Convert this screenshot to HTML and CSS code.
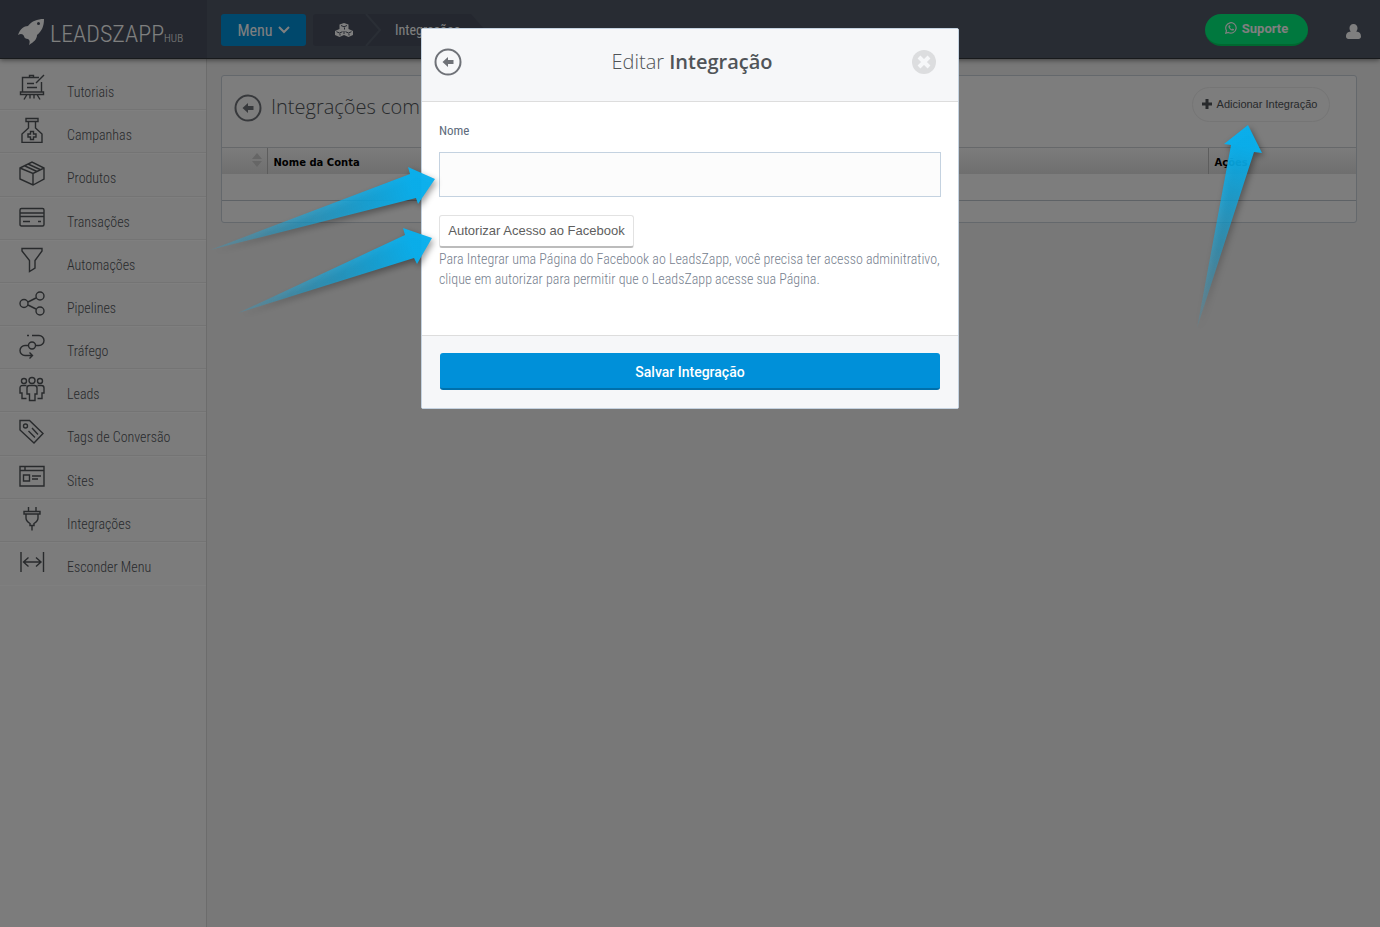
FILE: index.html
```html
<!DOCTYPE html>
<html lang="pt-br">
  <head>
    <meta charset="UTF-8" />
    <meta name="viewport" content="width=device-width, initial-scale=1.0" />
    <title>LeadsZapp Hub - Integrações</title>
    <link rel="stylesheet" href="styles.css">
  </head>

  <body>
    <header class="topo">
      <a class="logo" href="#">
        <svg class="logo-foguete" viewBox="0 0 26 26" aria-hidden="true">
          <path fill-rule="evenodd" d="M26 0C19 0 14 2 10 7C6 7 2 10 0 16C3 14 5 15 6 17C6 19 8 20 10 20C12 21 12 23 11 26C16 23 19 20 19 16C24 12 26 7 26 0ZM20.500 3A1.500 1.500 0 1 1 20.500 6A1.500 1.500 0 1 1 20.500 3Z" />
        </svg>
        <span class="logo-nome">LEADSZAPP</span><span class="logo-hub">HUB</span>
      </a>
      <div class="barra">
        <button class="btn-menu" type="button">
          Menu
          <svg viewBox="0 0 12 8" aria-hidden="true"><path d="M1 1L6 6L11 1" /></svg>
        </button>
        <nav class="trilha" aria-label="Trilha">
          <a class="trilha-inicio" href="#" aria-label="Início">
            <svg viewBox="0 0 18 14" aria-hidden="true">
              <path class="cubo" d="M9 0L13.500 1.500V6L18 8V12L13.500 14L9 12L4.500 14L0 12V8L4.500 6V1.500Z" />
              <path class="cubo-aresta" d="M6 2.500L9 3.800L12 2.500M9.500 4.500V6.500M1.500 8.700L4.500 10L7.500 8.700M5 10.700V12.500M10.500 8.700L13.500 10L16.500 8.700M14 10.700V12.500M9 8V11" />
            </svg>
          </a>
          <svg class="trilha-seta" viewBox="0 0 16 32" aria-hidden="true"><path d="M1 0L15 16L1 32" /></svg>
          <a class="trilha-atual" href="#">Integrações</a>
        </nav>
        <button class="btn-suporte" type="button">
          <svg viewBox="0 0 12 12" aria-hidden="true">
            <path class="traco" d="M0.800 11.200L1.500 8.600A5.200 5.200 0 1 1 3.500 10.500Z" />
            <path class="fone" d="M4 3.200C3 4 3.300 5.500 4.700 7C6.200 8.500 8 9.200 8.900 8C9.300 7.400 9 7.200 7.700 6.600L6.900 7.300C6 7 5.200 6.200 4.900 5.300L5.500 4.600L4.900 3.200Z" />
          </svg>
          Suporte
        </button>
        <a class="usuario" href="#" aria-label="Usuário">
          <svg viewBox="0 0 15 15" aria-hidden="true"><path d="M7.500 0C10 0 11.500 1.700 11.500 4C11.500 5.500 11 6.700 10.200 7.400C13 7.600 15 9 15 12.500C15 14 14 15 12.500 15H2.500C1 15 0 14 0 12.500C0 9 2 7.600 4.800 7.400C4 6.700 3.500 5.500 3.500 4C3.500 1.700 5 0 7.500 0Z" /></svg>
        </a>
      </div>
    </header>

    <div class="pagina">
      <aside class="lateral">
        <ul class="menu">
          <li><a href="#">
            <svg viewBox="0 0 26 26"><path d="M10.500 3.500V1.500H14.500V3.500M20 3.500H3.500V18M22.500 8V18M1.500 18H24.500V20.500H1.500ZM8 20.500L5 25.500M11 20.500V24.500M15 20.500V24.500M18 20.500L21 25.500M8 9.500H15M8 13.500H18M25 1L17 9" /></svg>
            <span>Tutoriais</span></a></li>
          <li><a href="#">
            <svg viewBox="0 0 26 26"><path d="M7 1.500H19V4.500H7ZM9.500 4.500V11L3 17V25.500H23V17L16.500 11V4.500M11.500 14.500H14.500V17H17V20H14.500V22.500H11.500V20H9V17H11.500Z" /></svg>
            <span>Campanhas</span></a></li>
          <li><a href="#">
            <svg viewBox="0 0 26 26"><path d="M1 8L13 2L25 8V19L14 25L1 19ZM1 8L14 13.500L25 8M14 13.500V25M6 6L18 11.500M9 4L21 9.500" /></svg>
            <span>Produtos</span></a></li>
          <li><a href="#">
            <svg viewBox="0 0 26 26"><path d="M2.500 4.500H23.500Q25 4.500 25 6V20.500Q25 22 23.500 22H2.500Q1 22 1 20.500V6Q1 4.500 2.500 4.500ZM1 9H25M1 12.500H25M4 17.500H11M19 17.500H22" /></svg>
            <span>Transações</span></a></li>
          <li><a href="#">
            <svg viewBox="0 0 26 26"><path d="M3 1.500H23V4L16 13.500V21L10.500 24.500V13.500L3 4Z" /></svg>
            <span>Automações</span></a></li>
          <li><a href="#">
            <svg viewBox="0 0 26 26"><circle cx="5" cy="13.500" r="4" /><circle cx="21" cy="6" r="4" /><circle cx="21" cy="21" r="4" /><path d="M9 12L17 8M9 15L17 19" /></svg>
            <span>Pipelines</span></a></li>
          <li><a href="#">
            <svg viewBox="0 0 26 26"><circle cx="13" cy="12.500" r="3.500" /><path d="M8 2.500H10M13 2.500H20A5 5 0 0 1 20 12.500H16.500M9.500 12.500H6A5 5 0 0 0 6 22.500H13.500M10.500 19.500L13.500 22.500L10.500 25.500" /></svg>
            <span>Tráfego</span></a></li>
          <li><a href="#">
            <svg viewBox="0 0 26 26"><circle cx="13" cy="4.500" r="3" /><circle cx="5" cy="5" r="2.500" /><circle cx="21" cy="5" r="2.500" /><path d="M8 12Q8 9.500 10.500 9.500H15.500Q18 9.500 18 12V18H16V24.500H10.500V18H8ZM7.500 9.500H3.500Q1 9.500 1 12V17H3V22.500H7.500M18.500 9.500H22.500Q25 9.500 25 12V17H23V22.500H18.500" /></svg>
            <span>Leads</span></a></li>
          <li><a href="#">
            <svg viewBox="0 0 26 26"><path d="M1 1.500H10.500L24 14.500L15 24L1 11ZM13 9L19 15.500M9.500 12L16 18.500" /><circle cx="6.500" cy="7" r="2" /></svg>
            <span>Tags de Conversão</span></a></li>
          <li><a href="#">
            <svg viewBox="0 0 26 26"><path d="M1 3.500H25V23H1ZM1 7.500H25M6 3.500V7.500M4.500 12H10.500V18H4.500ZM13 13H22M13 16H19" /></svg>
            <span>Sites</span></a></li>
          <li><a href="#">
            <svg viewBox="0 0 26 26"><path d="M9.500 1V5M17 1V5M5 5.500H21V8H5ZM7 8V12Q7 15 11 17.500V19.500H15V17.500Q19 15 19 12V8M13 19.500V24.500" /></svg>
            <span>Integrações</span></a></li>
          <li><a href="#">
            <svg viewBox="0 0 26 26"><path d="M2 3V23M24.500 3V23M4.500 13H22M9.500 8.500L4.500 13L9.500 17.500M17 8.500L22 13L17 17.500" /></svg>
            <span>Esconder Menu</span></a></li>
        </ul>
      </aside>

      <main class="conteudo">
        <section class="painel">
          <div class="painel-topo">
            <button class="btn-voltar" type="button" aria-label="Voltar">
              <svg viewBox="0 0 28 28"><circle cx="14" cy="14" r="12.500" /><path d="M8.500 14L14 9V12H19.500V16H14V19Z" /></svg>
            </button>
            <h1>Integrações com Facebook</h1>
            <button class="btn-adicionar" type="button">
              <svg viewBox="0 0 12 12" aria-hidden="true"><path d="M6 1V11M1 6H11" /></svg>
              Adicionar Integração
            </button>
          </div>
          <table class="tabela">
            <thead>
              <tr>
                <th class="col-ordem" aria-label="Ordenar">
                  <svg viewBox="0 0 10 14"><path d="M5 0L10 6H0ZM0 8H10L5 14Z" /></svg>
                </th>
                <th>Nome da Conta</th>
                <th class="col-acoes">Ações</th>
              </tr>
            </thead>
            <tbody>
              <tr><td colspan="3"></td></tr>
            </tbody>
          </table>
        </section>
      </main>
    </div>

    <div class="fundo">
      <form class="modal" role="dialog" aria-labelledby="titulo-modal">
        <div class="modal-topo">
          <button class="btn-voltar" type="button" aria-label="Voltar">
            <svg viewBox="0 0 28 28"><circle cx="14" cy="14" r="12.500" /><path d="M8.500 14L14 9V12H19.500V16H14V19Z" /></svg>
          </button>
          <h2 id="titulo-modal">Editar <b>Integração</b></h2>
          <button class="btn-fechar" type="button" aria-label="Fechar">
            <svg viewBox="0 0 24 24"><circle cx="12" cy="12" r="12" /><path d="M7 7L17 17M17 7L7 17" /></svg>
          </button>
        </div>
        <div class="modal-corpo">
          <label for="nome">Nome</label>
          <input id="nome" type="text" />
          <button class="btn-autorizar" type="button">Autorizar Acesso ao Facebook</button>
          <p>Para Integrar uma Página do Facebook ao LeadsZapp, você precisa ter acesso adminitrativo, clique em autorizar para permitir que o LeadsZapp acesse sua Página.</p>
        </div>
        <div class="modal-rodape">
          <button class="btn-salvar" type="button">Salvar Integração</button>
        </div>

        <!-- setas que apontam para o campo e para o botão -->
        <svg class="setas" viewBox="0 0 230 160" aria-hidden="true">
          <defs>
            <linearGradient id="g1" gradientUnits="userSpaceOnUse" x1="2" y1="89" x2="225" y2="19">
              <stop offset="0" stop-color="#08b0ee" stop-opacity="0.2" />
              <stop offset="0.9" stop-color="#08b0ee" stop-opacity="0.97" />
            </linearGradient>
            <linearGradient id="g2" gradientUnits="userSpaceOnUse" x1="30" y1="152" x2="222" y2="78">
              <stop offset="0" stop-color="#08b0ee" stop-opacity="0.2" />
              <stop offset="0.9" stop-color="#08b0ee" stop-opacity="0.97" />
            </linearGradient>
          </defs>
          <path fill="url(#g1)" d="M0 90L200 14L198 7L225 19L208 44L206 38Z" />
          <path fill="url(#g2)" d="M28 153L195 75L193 68L222 78L207 104L204 98Z" />
        </svg>
      </form>
    </div>

    <svg class="seta-adicionar" viewBox="0 0 80 220" aria-hidden="true">
      <defs>
        <linearGradient id="g3" gradientUnits="userSpaceOnUse" x1="7" y1="208" x2="58" y2="5">
          <stop offset="0" stop-color="#08b0ee" stop-opacity="0.1" />
          <stop offset="0.9" stop-color="#08b0ee" stop-opacity="0.97" />
        </linearGradient>
      </defs>
      <path fill="url(#g3)" d="M7 208L41 25L34 24L58 5L72 33L64 32Z" />
    </svg>
  </body>
</html>
```
FILE: styles.css
```css
* {
  box-sizing: border-box;
}

body {
  margin: 0;
  min-height: 100vh;
  display: flex;
  flex-direction: column;
  background: #f0f0f0;
  color: #505458;
  font-family: "Roboto Condensed", "Liberation Sans Narrow", Roboto, sans-serif;
  font-size: 14px;
}

button {
  font-family: inherit;
  cursor: pointer;
}

a {
  color: inherit;
  text-decoration: none;
}

/* Topo */
.topo {
  display: flex;
  height: 59px;
  background: #505867;
  color: #fff;
  border-bottom: 1px solid #303438;
  box-shadow: 0 1px 5px rgba(0, 0, 0, 0.5);
  position: relative;
}

.logo {
  width: 207px;
  display: flex;
  align-items: baseline;
  padding: 17px 0 0 18px;
  background: #484f5e;
}

.logo-foguete {
  width: 26px;
  height: 26px;
  align-self: flex-start;
  margin: 2px 6px 0 0;
  fill: #fff;
}

.logo-nome {
  font-size: 24px;
  line-height: 34px;
  font-weight: 300;
}

.logo-hub {
  font-size: 11px;
  font-weight: 300;
}

.barra {
  flex: 1;
  display: flex;
  align-items: flex-start;
  padding: 14px 19px 0 14px;
}

.btn-menu {
  display: flex;
  align-items: center;
  justify-content: center;
  gap: 5px;
  width: 85px;
  height: 32px;
  padding: 0;
  border: 0;
  border-radius: 3px;
  background: #0090d9;
  color: #fff;
  font-size: 16px;
}

.btn-menu svg {
  width: 12px;
  height: 8px;
  fill: none;
  stroke: #fff;
  stroke-width: 2;
}

.trilha {
  display: flex;
  align-items: center;
  height: 32px;
  width: 172px;
  margin-left: 7px;
  background: #484f5e;
  border-radius: 3px;
  clip-path: polygon(0 0, 158px 0, 100% 50%, 158px 100%, 0 100%);
}

.trilha-inicio {
  display: flex;
  justify-content: center;
  width: 52px;
  padding-left: 10px;
}

.trilha-inicio svg {
  width: 18px;
  height: 14px;
}

.cubo {
  fill: #fff;
}

.cubo-aresta {
  fill: none;
  stroke: #484f5e;
}

.trilha-seta {
  width: 16px;
  height: 32px;
  fill: none;
  stroke: #545c6b;
  stroke-width: 2;
}

.trilha-atual {
  margin-left: 14px;
  font-size: 14px;
}

.btn-suporte {
  display: flex;
  align-items: center;
  justify-content: center;
  gap: 5px;
  width: 103px;
  height: 32px;
  margin-left: auto;
  padding: 0 0 2px;
  border: 0;
  border-bottom: 2px solid #00d060;
  border-radius: 16px;
  background: #00f07c;
  color: #fff;
  font: bold 13px Roboto, sans-serif;
}

.btn-suporte svg {
  width: 12px;
  height: 12px;
}

.traco {
  fill: none;
  stroke: #fff;
  stroke-width: 1.2;
}

.fone {
  fill: #fff;
}

.usuario {
  margin: 10px 0 0 38px;
}

.usuario svg {
  display: block;
  width: 15px;
  height: 15px;
  fill: #fff;
}

/* Menu lateral */
.pagina {
  flex: 1;
  display: flex;
}

.lateral {
  width: 207px;
  padding-top: 8px;
  background: #f8f8f8;
  border-right: 1px solid #d8d8d8;
}

.menu {
  display: grid;
  grid-auto-rows: 1fr;
  height: 518px;
  margin: 0;
  padding: 0;
  list-style: none;
}

.menu li {
  border-bottom: 1px solid #e8e8e8;
  box-shadow: 0 1px 0 #fff;
}

.menu li:last-child {
  border-color: transparent;
}

.menu a {
  display: flex;
  gap: 22px;
  padding: 7px 0 0 19px;
  color: #505458;
  font-weight: 300;
}

.menu svg {
  width: 26px;
  height: 26px;
  fill: none;
  stroke: #505458;
  stroke-width: 1.4;
}

.menu span {
  padding-top: 8px;
  line-height: 20px;
}

/* Painel */
.conteudo {
  flex: 1;
  padding: 16px 23px 16px 14px;
}

.painel {
  padding-bottom: 21px;
  background: #fafafa;
  border: 1px solid #c8d0d8;
  border-radius: 3px;
}

.painel-topo {
  display: flex;
  align-items: center;
  height: 71px;
  padding: 0 26px 0 12px;
}

.btn-voltar {
  width: 28px;
  height: 28px;
  margin-top: -8px;
  padding: 0;
  border: 0;
  background: none;
}

.btn-voltar svg {
  display: block;
  fill: #6f7278;
}

.btn-voltar circle {
  fill: none;
  stroke: #6f7278;
  stroke-width: 2;
}

h1,
h2 {
  margin: 0;
  color: #505458;
  font-family: "Open Sans", sans-serif;
  font-size: 20px;
  font-weight: 300;
}

h1 {
  margin: -10px 0 0 9px;
}

.btn-adicionar {
  display: flex;
  align-items: center;
  justify-content: center;
  gap: 4px;
  width: 138px;
  height: 35px;
  margin: -14px 0 0 auto;
  padding: 0 4px 2px 0;
  border: 1px solid #ebebeb;
  border-radius: 18px;
  background: #fafafa;
  color: #505458;
  font: 11px "Liberation Sans", sans-serif;
  white-space: nowrap;
}

.btn-adicionar svg {
  width: 12px;
  height: 12px;
  stroke: #505458;
  stroke-width: 3;
}

.tabela {
  width: 100%;
  border-collapse: collapse;
  table-layout: fixed;
  color: #000;
  font: 10px "DejaVu Sans", sans-serif;
}

.tabela thead {
  background: linear-gradient(#f8f8f8, #dedede);
}

.tabela th {
  height: 26px;
  padding: 3px 6px 0;
  border-top: 1px solid #ccd0d4;
  text-align: left;
}

.tabela th + th {
  border-left: 1px solid #bbb;
}

.tabela .col-ordem {
  width: 45px;
  padding: 0 5px;
  text-align: right;
}

.col-ordem svg {
  width: 10px;
  height: 14px;
  fill: #ccc;
}

.tabela .col-acoes {
  width: 148px;
}

.tabela td {
  height: 27px;
  padding: 0;
  border-bottom: 1px solid #bcc4cc;
}

/* Modal */
.fundo {
  position: fixed;
  inset: 0;
  padding-top: 28px;
  background: rgba(0, 0, 0, 0.5);
}

.modal {
  position: relative;
  width: 538px;
  max-width: 100%;
  margin: 0 auto;
  background: #fff;
  border: 1px solid #c4d2e0;
  border-radius: 2px;
}

.modal-topo {
  display: flex;
  align-items: center;
  justify-content: space-between;
  height: 73px;
  padding: 0 22px 0 12px;
  background: #f6f7f9;
  border-bottom: 1px solid #ddd;
}

.modal-topo .btn-voltar {
  margin-top: -6px;
}

h2 {
  flex: 1;
  margin-top: -8px;
  padding-left: 10px;
  text-align: center;
}

h2 b {
  font-weight: 600;
}

.btn-fechar {
  width: 24px;
  height: 24px;
  margin-top: -6px;
  padding: 0;
  border: 0;
  background: none;
}

.btn-fechar svg {
  display: block;
  fill: #dcdddf;
  stroke: #f6f7f9;
  stroke-width: 4;
}

.btn-fechar circle {
  stroke: none;
}

.modal-corpo {
  padding: 19px 17px 46px;
}

.modal-corpo label {
  display: block;
  margin-bottom: 11px;
  color: #5e6b7c;
  font-size: 13px;
  line-height: 20px;
}

.modal-corpo input {
  display: block;
  width: 100%;
  height: 45px;
  margin-bottom: 18px;
  padding: 0 12px;
  border: 1px solid #c4d2e0;
  background: #fcfcfc;
  font: 14px Roboto, sans-serif;
}

.btn-autorizar {
  display: block;
  width: 195px;
  height: 33px;
  padding: 0 0 2px;
  border: 1px solid #e2e2e2;
  border-bottom: 2px solid #bcbcbc;
  border-radius: 3px;
  background: #fff;
  color: #5e5e5e;
  font: 13px "Liberation Sans", sans-serif;
}

.modal-corpo p {
  margin: 1px 0 0;
  color: #76808e;
  font-weight: 300;
  line-height: 20px;
}

.modal-rodape {
  padding: 17px 18px 18px;
  background: #f6f7f9;
  border-top: 1px solid #ddd;
}

.btn-salvar {
  display: block;
  width: 100%;
  height: 37px;
  padding: 2px 0 0;
  border: 0;
  border-bottom: 2px solid #0070ab;
  border-radius: 3px;
  background: #0090d9;
  color: #fff;
  font: 500 14px Roboto, sans-serif;
}

/* Setas */
.setas,
.seta-adicionar {
  position: absolute;
  pointer-events: none;
  filter: drop-shadow(2px 3px 3px rgba(0, 0, 0, 0.4));
}

.setas {
  top: 131px;
  left: -212px;
  width: 230px;
  height: 160px;
}

.seta-adicionar {
  top: 120px;
  right: 110px;
  width: 80px;
  height: 220px;
}
```
